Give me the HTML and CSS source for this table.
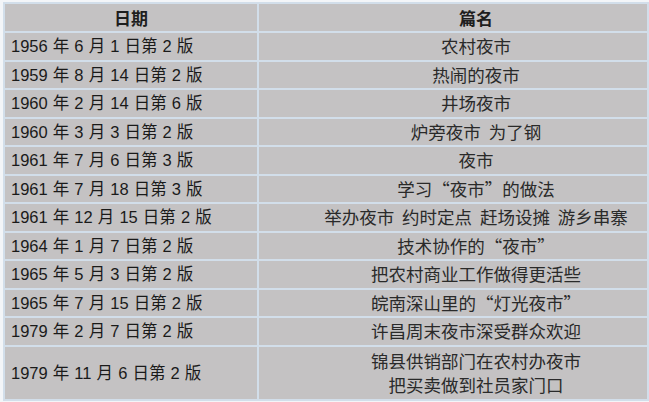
FILE: index.html
```html
<!DOCTYPE html>
<html lang="zh">
<head>
<meta charset="utf-8">
<link rel="stylesheet" href="styles.css">
</head>
<body>
<table class="list">
  <colgroup><col class="c-date"><col class="c-title"></colgroup>
  <thead>
    <tr><th class="date-h">日期</th><th class="title">篇名</th></tr>
  </thead>
  <tbody>
    <tr><td class="date">1956 年 6 月 1 日第 2 版</td><td class="title">农村夜市</td></tr>
    <tr><td class="date">1959 年 8 月 14 日第 2 版</td><td class="title">热闹的夜市</td></tr>
    <tr><td class="date">1960 年 2 月 14 日第 6 版</td><td class="title">井场夜市</td></tr>
    <tr><td class="date">1960 年 3 月 3 日第 2 版</td><td class="title">炉旁夜市&nbsp;&nbsp;为了钢</td></tr>
    <tr><td class="date">1961 年 7 月 6 日第 3 版</td><td class="title">夜市</td></tr>
    <tr><td class="date">1961 年 7 月 18 日第 3 版</td><td class="title">学习“夜市”的做法</td></tr>
    <tr><td class="date">1961 年 12 月 15 日第 2 版</td><td class="title">举办夜市&nbsp;&nbsp;约时定点&nbsp;&nbsp;赶场设摊&nbsp;&nbsp;游乡串寨</td></tr>
    <tr><td class="date">1964 年 1 月 7 日第 2 版</td><td class="title">技术协作的“夜市”</td></tr>
    <tr><td class="date">1965 年 5 月 3 日第 2 版</td><td class="title">把农村商业工作做得更活些</td></tr>
    <tr><td class="date">1965 年 7 月 15 日第 2 版</td><td class="title">皖南深山里的“灯光夜市”</td></tr>
    <tr><td class="date">1979 年 2 月 7 日第 2 版</td><td class="title">许昌周末夜市深受群众欢迎</td></tr>
    <tr class="tall"><td class="date">1979 年 11 月 6 日第 2 版</td><td class="title">锦县供销部门在农村办夜市<br>把买卖做到社员家门口</td></tr>
  </tbody>
</table>
</body>
</html>
```
FILE: styles.css
```css
html, body {
  margin: 0;
  padding: 0;
  background: #f3f5f8;
}
body {
  padding: 2px 4px 0 3px;
  font-family: "Liberation Sans", "Noto Sans CJK SC", sans-serif;
  color: #1e1e1e;
}
.list {
  border-collapse: collapse;
  table-layout: fixed;
  width: 644px;
  background: #c4c2c3;
}
.c-date { width: 254px; }
.c-title { width: 390px; }
.list th, .list td {
  border: 2px solid #d2deea;
  padding: 0;
  height: 26.5px;
  font-size: 16px;
  line-height: 20px;
  vertical-align: middle;
}
.list th {
  height: 27px;
  font-family: "Noto Sans CJK SC", sans-serif;
  font-size: 17px;
  font-weight: bold;
  text-align: center;
}
.list td.date {
  padding-left: 6px;
  text-align: left;
  font-size: 16.5px;
  word-spacing: 0.5px;
  color: #1a1a1a;
}
.list .title {
  font-family: "Noto Sans CJK SC", sans-serif;
  text-align: center;
  padding-left: 46px;
}
.list td.title {
  font-size: 17.5px;
  color: #2a2a2a;
}
.list tr.tall td {
  height: 52px;
  line-height: 24px;
}
```
